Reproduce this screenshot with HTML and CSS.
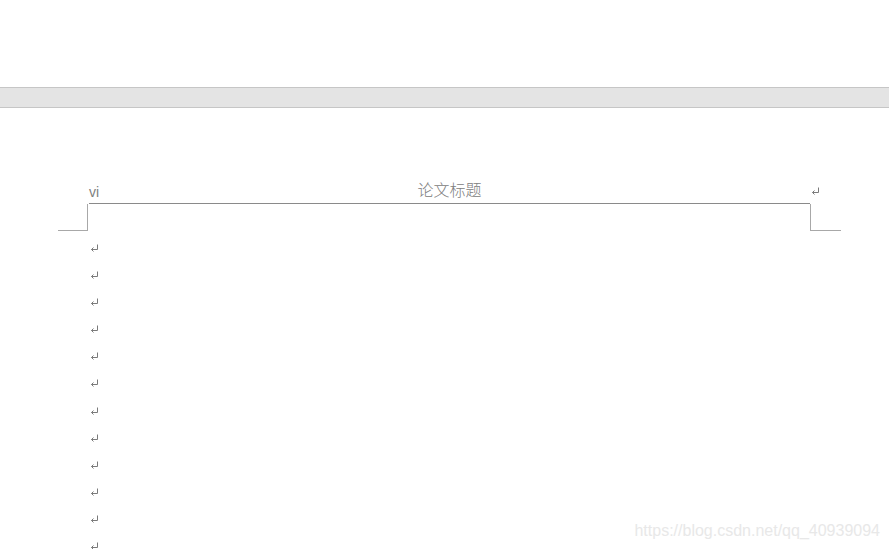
FILE: index.html
```html
<!DOCTYPE html>
<html lang="zh">
<head>
  <meta charset="UTF-8" />
  <title>论文标题</title>
  <link rel="stylesheet" href="styles.css">
</head>
<body>
  <div class="top-space"></div>
  <div class="band"></div>

  <div class="page">
    <div class="header">
      <span class="page-no">vi</span>
      <span class="title">论文标题</span>
      <span class="end-mark">
        <svg class="pmark" viewBox="0 0 9 8" width="9" height="8"><path d="M7.5 0.5V5.5H1.5M3.5 3.5L1.5 5.5L3.5 7.5"/></svg>
      </span>
    </div>
    <div class="crop">
      <div class="crop-left"></div>
      <div></div>
      <div class="crop-right"></div>
    </div>
    <div class="body-text" id="lines"></div>
  </div>

  <div class="watermark">https://blog.csdn.net/qq_40939094</div>

  <script>
    const lines = document.getElementById("lines");
    for (let i = 0; i < 12; i++) {
      const row = document.createElement("div");
      row.className = "line";
      row.innerHTML = '<svg class="pmark" viewBox="0 0 9 8" width="9" height="8"><path d="M7.5 0.5V5.5H1.5M3.5 3.5L1.5 5.5L3.5 7.5"/></svg>';
      lines.appendChild(row);
    }
  </script>
</body>
</html>
```

FILE: styles.css
```css
* {
  box-sizing: border-box;
  margin: 0;
  padding: 0;
}

body {
  font-family: 'Liberation Sans', 'Noto Sans CJK SC', sans-serif;
  background-color: #fff;
  width: 889px;
  height: 549px;
  overflow: hidden;
  position: relative;
}

.top-space {
  height: 87px;
}

.band {
  height: 21px;
  background-color: #e4e4e4;
  border-top: 1px solid #c6c6c6;
  border-bottom: 1px solid #c6c6c6;
}

.page {
  margin-left: 58px;
  width: 783px;
  padding-top: 73px;
}

.header {
  margin: 0 31px;
  display: grid;
  grid-template-columns: 1fr auto 1fr;
  align-items: end;
  height: 23px;
  border-bottom: 1px solid #8a8a8a;
  color: #808080;
}

.page-no {
  font-size: 14px;
  line-height: 16px;
  margin-bottom: 3px;
}

.title {
  font-size: 16px;
  line-height: 19px;
  margin-bottom: 3px;
  font-weight: 300;
}

.end-mark {
  justify-self: end;
  margin-right: -10px;
  height: 20px;
  display: flex;
  align-items: center;
  margin-bottom: 2px;
}

.crop {
  display: grid;
  grid-template-columns: 30px 1fr 31px;
  height: 27px;
}

.crop-left {
  border-right: 1px solid #a8a8a8;
  border-bottom: 1px solid #a8a8a8;
}

.crop-right {
  border-left: 1px solid #a8a8a8;
  border-bottom: 1px solid #a8a8a8;
}

.body-text {
  padding-left: 32px;
  padding-top: 3px;
}

.line {
  height: 27.17px;
  display: flex;
  align-items: center;
}

.pmark {
  display: block;
  fill: none;
  stroke: #7a7a7a;
  stroke-width: 1;
}

.watermark {
  position: absolute;
  right: 9px;
  bottom: 9px;
  font-size: 16px;
  color: #e8e8e8;
}
```
